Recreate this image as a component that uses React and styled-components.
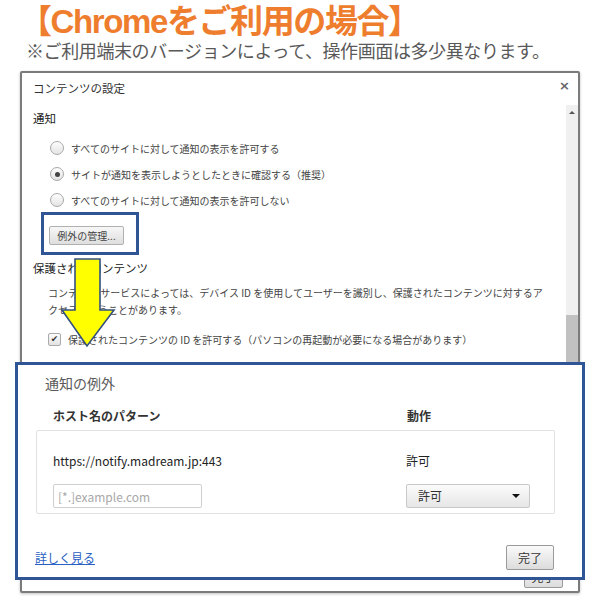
import React from "react";
import styled, { createGlobalStyle } from "styled-components";

const JP = `"Noto Sans CJK JP", "Noto Sans", sans-serif`;
const HEAD = `"Liberation Sans", "Noto Sans CJK JP", sans-serif`;

const GlobalStyle = createGlobalStyle`
  html, body {
    margin: 0;
    padding: 0;
    background: #fff;
    font-family: ${JP};
  }
`;

export default function App() {
  return (
    <Page>
      <GlobalStyle />
      <Title>【Chromeをご利用の場合】</Title>
      <Note>※ご利用端末のバージョンによって、操作画面は多少異なります。</Note>

      <Dialog>
        <DialogHead>
          <DialogTitle>コンテンツの設定</DialogTitle>
          <Close>×</Close>
        </DialogHead>
        <DialogBody>
          <Content>
            <Heading>通知</Heading>
            <Options>
              <Option>
                <Radio />
                すべてのサイトに対して通知の表示を許可する
              </Option>
              <Option>
                <Radio $checked />
                サイトが通知を表示しようとしたときに確認する（推奨）
              </Option>
              <Option>
                <Radio />
                すべてのサイトに対して通知の表示を許可しない
              </Option>
            </Options>
            <Highlight>
              <GrayButton>例外の管理...</GrayButton>
            </Highlight>
            <Heading $gap={5}>保護されたコンテンツ</Heading>
            <Paragraph>
              コンテンツ サービスによっては、デバイス ID を使用してユーザーを識別し、保護されたコンテンツに対するア
              <br />
              クセスを行うことがあります。
            </Paragraph>
            <CheckRow>
              <Check>✔</Check>
              保護されたコンテンツの ID を許可する（パソコンの再起動が必要になる場合があります）
            </CheckRow>
          </Content>
          <Scrollbar>
            <ScrollArrow />
            <Thumb />
          </Scrollbar>
        </DialogBody>
        <DialogFoot>
          <DoneButton>完了</DoneButton>
        </DialogFoot>
      </Dialog>

      <Arrow width="56" height="92" viewBox="0 0 56 92">
        <polygon
          points="15,2 40,2 40,53 54,53 27,89 2,53 15,53"
          fill="#ffff00"
          stroke="#34507f"
          strokeWidth="1.6"
          strokeLinejoin="miter"
        />
      </Arrow>

      <Panel>
        <PanelTitle>通知の例外</PanelTitle>
        <HeadRow>
          <span>ホスト名のパターン</span>
          <span>動作</span>
        </HeadRow>
        <Table>
          <Row>
            <span>https://notify.madream.jp:443</span>
            <span>許可</span>
          </Row>
          <Row $gap={14}>
            <Input placeholder="[*.]example.com" />
            <Select>
              <span>許可</span>
              <Caret />
            </Select>
          </Row>
        </Table>
        <PanelFoot>
          <Link href="#">詳しく見る</Link>
          <DoneButton $big>完了</DoneButton>
        </PanelFoot>
      </Panel>
    </Page>
  );
}

const Page = styled.div`
  position: relative;
  width: 600px;
  height: 600px;
  overflow: hidden;
`;

const Title = styled.h1`
  margin: 0;
  padding: 3px 0 0 19px;
  height: 41px;
  box-sizing: border-box;
  font-family: ${HEAD};
  font-size: 33px;
  line-height: 38px;
  font-weight: 700;
  color: #ee7d2e;
  letter-spacing: -1.4px;
  white-space: nowrap;
`;

const Note = styled.p`
  margin: 0;
  padding-left: 26px;
  height: 30px;
  font-family: ${HEAD};
  font-size: 18px;
  line-height: 22px;
  color: #595959;
  letter-spacing: -0.4px;
  white-space: nowrap;
`;

const Dialog = styled.div`
  margin-left: 20px;
  width: 560px;
  height: 522px;
  box-sizing: border-box;
  border: 2px solid #7b7b7b;
  border-radius: 2px;
  box-shadow: 0 1px 3px rgba(0, 0, 0, 0.25);
  display: flex;
  flex-direction: column;
  background: #fff;
  color: #333;
`;

const DialogHead = styled.div`
  height: 32px;
  display: flex;
  justify-content: space-between;
  align-items: flex-start;
  padding: 7px 8px 0 11px;
  box-sizing: border-box;
`;

const DialogTitle = styled.div`
  font-size: 11.5px;
  line-height: 16px;
  color: #333;
`;

const Close = styled.div`
  font-size: 13px;
  line-height: 12px;
  font-weight: 700;
  color: #666;
  font-family: "DejaVu Sans", sans-serif;
`;

const DialogBody = styled.div`
  height: 455px;
  display: flex;
`;

const Content = styled.div`
  flex: 1;
  padding: 5px 0 0 11px;
`;

const Heading = styled.div`
  margin-top: ${(p) => p.$gap || 0}px;
  font-size: 11.5px;
  line-height: 16px;
  color: #222;
`;

const Options = styled.div`
  margin-top: 12px;
  padding-left: 17px;
  display: flex;
  flex-direction: column;
  gap: 6px;
`;

const Option = styled.div`
  height: 20px;
  display: flex;
  align-items: center;
  gap: 7px;
  font-size: 10px;
  color: #444;
`;

const Radio = styled.span`
  width: 12px;
  height: 12px;
  border-radius: 50%;
  border: 1px solid #a8a8a8;
  background: linear-gradient(#fdfdfd, #e4e4e4);
  display: grid;
  place-items: center;
  &::after {
    content: "";
    width: 5px;
    height: 5px;
    border-radius: 50%;
    background: ${(p) => (p.$checked ? "#444" : "transparent")};
  }
`;

const Highlight = styled.div`
  margin: 2px 0 0 8px;
  width: 98px;
  height: 43px;
  box-sizing: border-box;
  border: 3px solid #2f5597;
  padding: 6px 0 0 5px;
`;

const GrayButton = styled.button`
  width: 75px;
  height: 19px;
  padding: 0;
  border: 1px solid #b0b0b0;
  border-radius: 2px;
  background: linear-gradient(#f7f7f7, #dedede);
  font-family: ${JP};
  font-size: 10px;
  color: #444;
`;

const Paragraph = styled.p`
  margin: 8px 0 0 15px;
  font-size: 10px;
  line-height: 17px;
  color: #444;
`;

const CheckRow = styled.div`
  margin: 12px 0 0 15px;
  height: 18px;
  display: flex;
  align-items: center;
  gap: 7px;
  font-size: 10px;
  color: #444;
`;

const Check = styled.span`
  width: 11px;
  height: 11px;
  border: 1px solid #aaa;
  border-radius: 2px;
  background: linear-gradient(#fdfdfd, #e2e2e2);
  display: grid;
  place-items: center;
  font-size: 9px;
  line-height: 1;
  color: #333;
  font-family: "DejaVu Sans", sans-serif;
`;

const Scrollbar = styled.div`
  width: 12px;
  background: #f0f0f0;
  display: flex;
  flex-direction: column;
  align-items: center;
`;

const ScrollArrow = styled.span`
  margin-top: 6px;
  border-left: 3px solid transparent;
  border-right: 3px solid transparent;
  border-bottom: 3px solid #555;
`;

const Thumb = styled.div`
  margin-top: 201px;
  width: 12px;
  height: 200px;
  background: #c1c1c1;
`;

const DialogFoot = styled.div`
  flex: 1;
  display: flex;
  justify-content: flex-end;
  align-items: flex-end;
  padding: 0 15px 3px 0;
`;

const DoneButton = styled.button`
  width: ${(p) => (p.$big ? 48 : 39)}px;
  height: ${(p) => (p.$big ? 25 : 24)}px;
  padding: 0;
  border: 1px solid #9a9a9a;
  border-radius: 2px;
  background: linear-gradient(#fafafa, #dcdcdc);
  font-family: ${JP};
  font-size: 12px;
  color: #333;
`;

const Arrow = styled.svg`
  position: absolute;
  left: 60px;
  top: 257px;
`;

const Panel = styled.div`
  position: absolute;
  left: 15px;
  top: 362px;
  width: 570px;
  height: 218px;
  box-sizing: border-box;
  border: 3px solid #2f5597;
  background: #fff;
  padding: 0 27px 0 18px;
  color: #333;
`;

const PanelTitle = styled.div`
  margin: 8px 0 0 9px;
  font-size: 14px;
  line-height: 20px;
  color: #5a5a5a;
`;

const HeadRow = styled.div`
  margin-top: 14px;
  display: grid;
  grid-template-columns: 354px 1fr;
  padding-left: 17px;
  font-size: 12px;
  line-height: 18px;
  font-weight: 700;
  color: #333;
`;

const Table = styled.div`
  margin-top: 5px;
  border: 1px solid #e2e2e2;
  border-radius: 2px;
  padding: 21px 0 5px 16px;
`;

const Row = styled.div`
  margin-top: ${(p) => p.$gap || 0}px;
  display: grid;
  grid-template-columns: 353px 1fr;
  align-items: center;
  font-size: 12px;
  line-height: 18px;
  color: #222;
`;

const Input = styled.input`
  width: 149px;
  height: 24px;
  box-sizing: border-box;
  border: 1px solid #cfcfcf;
  border-radius: 2px;
  padding: 0 0 0 4px;
  font-family: ${JP};
  font-size: 12px;
  &::placeholder {
    color: #a8a8a8;
  }
`;

const Select = styled.div`
  width: 124px;
  height: 24px;
  box-sizing: border-box;
  border: 1px solid #c8c8c8;
  border-radius: 2px;
  background: linear-gradient(#fbfbfb, #e6e6e6);
  display: flex;
  align-items: center;
  justify-content: space-between;
  padding: 0 9px 0 11px;
  font-size: 12px;
  color: #333;
`;

const Caret = styled.span`
  border-left: 4px solid transparent;
  border-right: 4px solid transparent;
  border-top: 4px solid #111;
`;

const PanelFoot = styled.div`
  margin-top: 31px;
  display: flex;
  justify-content: space-between;
  align-items: center;
  padding-right: 1px;
`;

const Link = styled.a`
  margin-left: -1px;
  font-size: 12px;
  color: #2a5fc4;
  text-decoration: underline;
`;
